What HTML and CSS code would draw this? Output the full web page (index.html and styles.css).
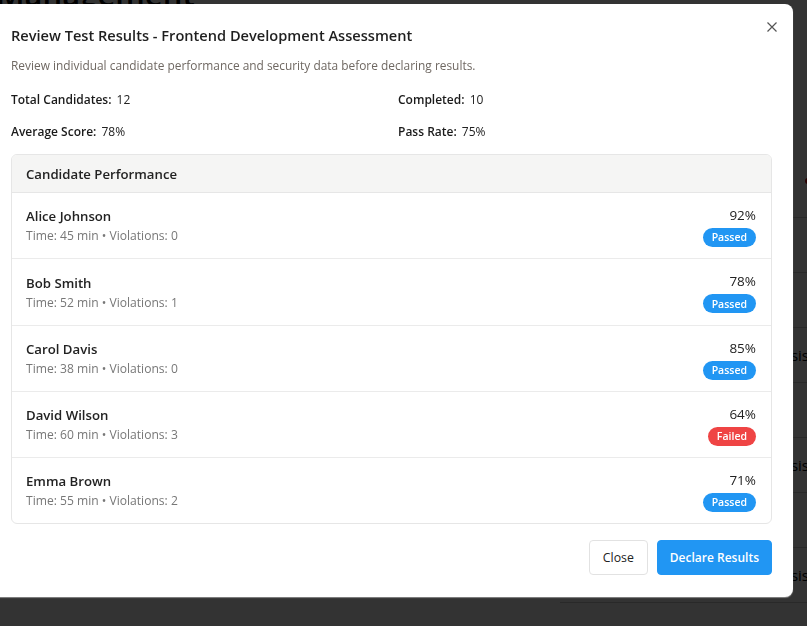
FILE: index.html
```html
<!DOCTYPE html>
<html lang="en">
<head>
<meta charset="utf-8">
<title>Review Test Results</title>
<link rel="stylesheet" href="styles.css">
</head>
<body>
<div class="page">
  <h1 class="page-title">Management</h1>
  <div class="bg-rows">
    <div class="bg-row"><span class="bg-dot"></span></div>
    <div class="bg-row"></div>
    <div class="bg-row"></div>
    <div class="bg-row"><span class="bg-text">Analysis</span></div>
    <div class="bg-row"></div>
    <div class="bg-row"><span class="bg-text">Analysis</span></div>
    <div class="bg-row"></div>
    <div class="bg-row"><span class="bg-text">Analysis</span></div>
  </div>
  <div class="bg-score">Score: <span class="bg-green">92%</span></div>
</div>

<div class="overlay"></div>

<div class="modal" role="dialog">
  <button class="modal-close" aria-label="Close">
    <svg width="10" height="10" viewBox="0 0 10 10"><path d="M0.5 0.5 L9.5 9.5 M9.5 0.5 L0.5 9.5" stroke="#555" stroke-width="1.2" fill="none"/></svg>
  </button>
  <h2 class="modal-title">Review Test Results - Frontend Development Assessment</h2>
  <p class="modal-sub">Review individual candidate performance and security data before declaring results.</p>

  <div class="stats">
    <div class="stat"><span class="stat-label">Total Candidates:</span> 12</div>
    <div class="stat"><span class="stat-label">Completed:</span> 10</div>
    <div class="stat"><span class="stat-label">Average Score:</span> 78%</div>
    <div class="stat"><span class="stat-label">Pass Rate:</span> 75%</div>
  </div>

  <div class="panel">
    <div class="panel-head">Candidate Performance</div>
    <div class="cand">
      <div class="cand-info"><div class="cand-name">Alice Johnson</div><div class="cand-meta">Time: 45 min • Violations: 0</div></div>
      <div class="cand-res"><div class="cand-score">92%</div><span class="badge pass">Passed</span></div>
    </div>
    <div class="cand">
      <div class="cand-info"><div class="cand-name">Bob Smith</div><div class="cand-meta">Time: 52 min • Violations: 1</div></div>
      <div class="cand-res"><div class="cand-score">78%</div><span class="badge pass">Passed</span></div>
    </div>
    <div class="cand">
      <div class="cand-info"><div class="cand-name">Carol Davis</div><div class="cand-meta">Time: 38 min • Violations: 0</div></div>
      <div class="cand-res"><div class="cand-score">85%</div><span class="badge pass">Passed</span></div>
    </div>
    <div class="cand">
      <div class="cand-info"><div class="cand-name">David Wilson</div><div class="cand-meta">Time: 60 min • Violations: 3</div></div>
      <div class="cand-res"><div class="cand-score">64%</div><span class="badge fail">Failed</span></div>
    </div>
    <div class="cand">
      <div class="cand-info"><div class="cand-name">Emma Brown</div><div class="cand-meta">Time: 55 min • Violations: 2</div></div>
      <div class="cand-res"><div class="cand-score">71%</div><span class="badge pass">Passed</span></div>
    </div>
  </div>

  <div class="modal-foot">
    <button class="btn btn-light">Close</button>
    <button class="btn btn-primary">Declare Results</button>
  </div>
</div>
</body>
</html>
```

FILE: styles.css
```css
* { box-sizing: border-box; }
html, body { margin: 0; padding: 0; }
body {
  font-family: "Open Sans", "Noto Sans", "Liberation Sans", sans-serif;
  background: #fff;
  color: #222;
  width: 807px;
  height: 626px;
  overflow: hidden;
}

/* background page */
.page { padding: 0; height: 626px; position: relative; }
.page-title { margin: -26px 0 0 -4px; font-size: 31px; font-weight: 600; line-height: 40px; color: #000; }
.bg-rows { margin: 0 0 0 560px; padding-top: 149px; }
.bg-row { height: 55px; border-bottom: 1px solid #ccc; display: flex; align-items: center; justify-content: flex-end; }
.bg-text { font-size: 15px; color: #000; margin-right: -2px; }
.bg-dot { width: 6px; height: 6px; border-radius: 50%; background: #c00; margin: 0 -4px 18px 0; }
.bg-score { position: absolute; left: 310px; top: 592px; font-size: 13px; line-height: 18px; color: #000; }
.bg-green { color: #0a7a2a; }

.overlay { position: fixed; inset: 0; background: rgba(0,0,0,0.8); }

/* modal */
.modal {
  position: fixed;
  left: -10px;
  top: 4px;
  width: 803px;
  height: 593px;
  background: #fff;
  border-radius: 8px;
  padding: 19px 21px 22px 21px;
  box-shadow: 0 1px 1px rgba(255,255,255,0.4);
}
.modal-close {
  position: absolute;
  right: 12px;
  top: 14px;
  width: 18px;
  height: 18px;
  border: 0;
  background: none;
  padding: 0;
  display: flex;
  align-items: center;
  justify-content: center;
}
.modal-title { margin: 0; font-size: 14.6px; font-weight: 600; line-height: 24px; color: #1f1f1f; }
.modal-sub { margin: 9px 0 0; font-size: 11.9px; line-height: 18px; color: #6f6862; }

.stats { display: grid; grid-template-columns: 387px 1fr; row-gap: 14px; margin-top: 17px; }
.stat { font-size: 12px; line-height: 18px; color: #222; }
.stat-label { font-weight: 600; margin-right: 2px; color: #1a1a1a; }

.panel { margin-top: 13px; border: 1px solid #e6e6e6; border-radius: 6px; overflow: hidden; }
.panel-head { height: 38px; background: #f5f5f4; border-bottom: 1px solid #e6e6e6; padding: 0 14px; display: flex; align-items: center; font-size: 13.2px; font-weight: 600; color: #222; }
.cand { height: 66px; display: flex; justify-content: space-between; align-items: center; padding: 0 15px 0 14px; border-bottom: 1px solid #ebebeb; }
.cand:nth-child(3) { height: 67px; }
.cand:last-child { border-bottom: 0; height: 65px; }
.cand-name { font-size: 13.2px; font-weight: 600; line-height: 20px; color: #222; }
.cand-meta { font-size: 12.1px; line-height: 18px; color: #777; margin-top: 1px; }
.cand-res { display: flex; flex-direction: column; align-items: flex-end; }
.cand-score { font-size: 13.5px; line-height: 20px; color: #222; }
.badge { margin-top: 3px; height: 19px; padding: 0 9px; border-radius: 10px; font-size: 10.5px; font-weight: 600; color: #fff; display: inline-flex; align-items: center; }
.badge.pass { background: #2196f3; }
.badge.fail { background: #ef4444; }

.modal-foot { display: flex; justify-content: flex-end; gap: 9px; margin-top: 16px; }
.btn { height: 35px; border-radius: 4px; font-family: inherit; font-size: 12.3px; padding: 0 13px; }
.btn-light { background: #fff; border: 1px solid #e2e2e2; color: #222; }
.btn-primary { background: #2196f3; border: 1px solid #2196f3; color: #fff; font-weight: 600; padding: 0 12px; font-size: 12px; }
```
